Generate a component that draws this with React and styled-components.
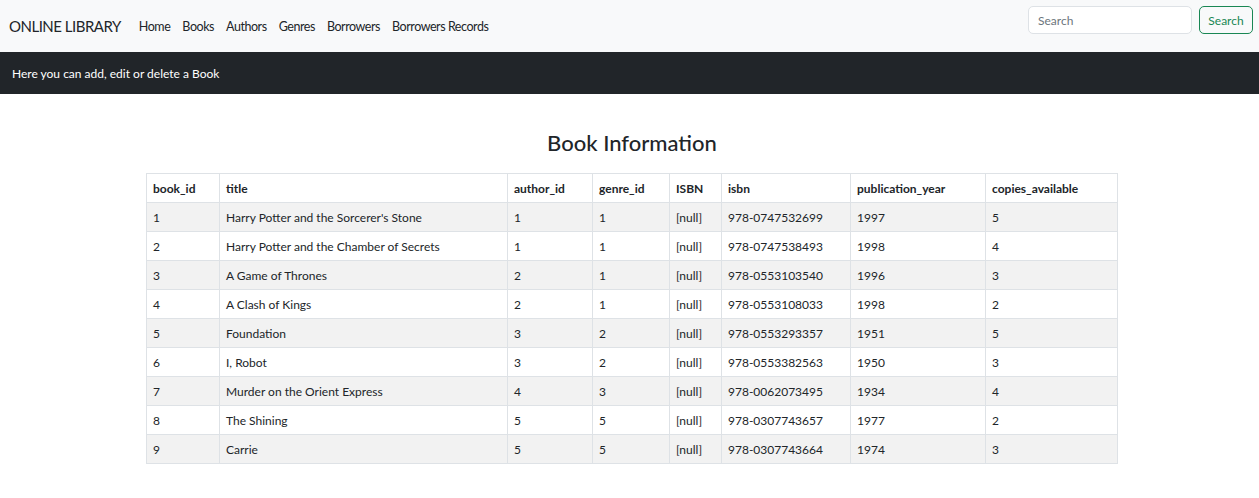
import React from "react";
import styled, { createGlobalStyle } from "styled-components";

const Global = createGlobalStyle`
  html, body { margin: 0; padding: 0; background: #fff; }
  body { font-family: Lato, "Noto Sans", sans-serif; color: #212529; }
  * { box-sizing: border-box; }
`;

const Nav = styled.nav`
  height: 52px;
  background: #f8f9fa;
  display: flex;
  align-items: center;
  padding: 0 6px 0 9px;
`;

const Brand = styled.a`
  font-size: 15px;
  letter-spacing: -0.5px;
  color: #212529;
  margin-right: 18px;
  text-decoration: none;
`;

const Links = styled.div`
  display: flex;
  gap: 12px;
  flex: 1;
`;

const NavLink = styled.a`
  font-size: 12.5px;
  letter-spacing: -0.45px;
  color: #212529;
  text-decoration: none;
`;

const SearchForm = styled.form`
  display: flex;
  gap: 7px;
  margin-top: -12px;
`;

const Input = styled.input`
  width: 164px;
  height: 28px;
  border: 1px solid #dee2e6;
  border-radius: 5px;
  padding: 0 9px;
  font-family: inherit;
  font-size: 12px;
  color: #212529;
  &::placeholder { color: #6c757d; }
`;

const Button = styled.button`
  height: 28px;
  width: 54px;
  border: 1px solid #198754;
  border-radius: 5px;
  background: transparent;
  color: #198754;
  font-family: inherit;
  font-size: 12px;
  padding: 0;
`;

const Banner = styled.div`
  height: 42px;
  background: #212529;
  color: #fff;
  font-size: 12px;
  display: flex;
  align-items: center;
  padding-left: 12px;
`;

const Main = styled.main`
  padding-left: 5px;
`;

const Title = styled.h2`
  margin: 34px 0 15px;
  text-align: center;
  font-size: 22px;
  font-weight: 500;
  line-height: 30px;
  color: #212529;
`;

const Table = styled.table`
  width: 971px;
  margin: 0 auto;
  border-collapse: collapse;
  font-size: 12px;
  table-layout: fixed;
`;

const Th = styled.th`
  text-align: left;
  font-weight: 700;
  height: 29px;
  padding: 0 6px;
  border: 1px solid #dee2e6;
  width: ${(p) => p.$w}px;
`;

const Row = styled.tr`
  background: ${(p) => (p.$odd ? "#f2f2f2" : "#fff")};
`;

const Td = styled.td`
  height: 29px;
  padding: 0 6px;
  border: 1px solid #dee2e6;
  white-space: nowrap;
`;

const cols = [
  ["book_id", 73],
  ["title", 288],
  ["author_id", 85],
  ["genre_id", 77],
  ["ISBN", 52],
  ["isbn", 129],
  ["publication_year", 135],
  ["copies_available", 132],
];

const rows = [
  [1, "Harry Potter and the Sorcerer's Stone", 1, 1, "978-0747532699", 1997, 5],
  [2, "Harry Potter and the Chamber of Secrets", 1, 1, "978-0747538493", 1998, 4],
  [3, "A Game of Thrones", 2, 1, "978-0553103540", 1996, 3],
  [4, "A Clash of Kings", 2, 1, "978-0553108033", 1998, 2],
  [5, "Foundation", 3, 2, "978-0553293357", 1951, 5],
  [6, "I, Robot", 3, 2, "978-0553382563", 1950, 3],
  [7, "Murder on the Orient Express", 4, 3, "978-0062073495", 1934, 4],
  [8, "The Shining", 5, 5, "978-0307743657", 1977, 2],
  [9, "Carrie", 5, 5, "978-0307743664", 1974, 3],
];

export default function App() {
  return (
    <>
      <Global />
      <Nav>
        <Brand href="#">ONLINE LIBRARY</Brand>
        <Links>
          {["Home", "Books", "Authors", "Genres", "Borrowers", "Borrowers Records"].map((l) => (
            <NavLink key={l} href="#">{l}</NavLink>
          ))}
        </Links>
        <SearchForm onSubmit={(e) => e.preventDefault()}>
          <Input placeholder="Search" />
          <Button type="submit">Search</Button>
        </SearchForm>
      </Nav>
      <Banner>Here you can add, edit or delete a Book</Banner>
      <Main>
        <Title>Book Information</Title>
        <Table>
          <thead>
            <tr>
              {cols.map(([c, w]) => (
                <Th key={c} $w={w}>{c}</Th>
              ))}
            </tr>
          </thead>
          <tbody>
            {rows.map((r, i) => (
              <Row key={r[0]} $odd={i % 2 === 0}>
                <Td>{r[0]}</Td>
                <Td>{r[1]}</Td>
                <Td>{r[2]}</Td>
                <Td>{r[3]}</Td>
                <Td>[null]</Td>
                <Td>{r[4]}</Td>
                <Td>{r[5]}</Td>
                <Td>{r[6]}</Td>
              </Row>
            ))}
          </tbody>
        </Table>
      </Main>
    </>
  );
}
